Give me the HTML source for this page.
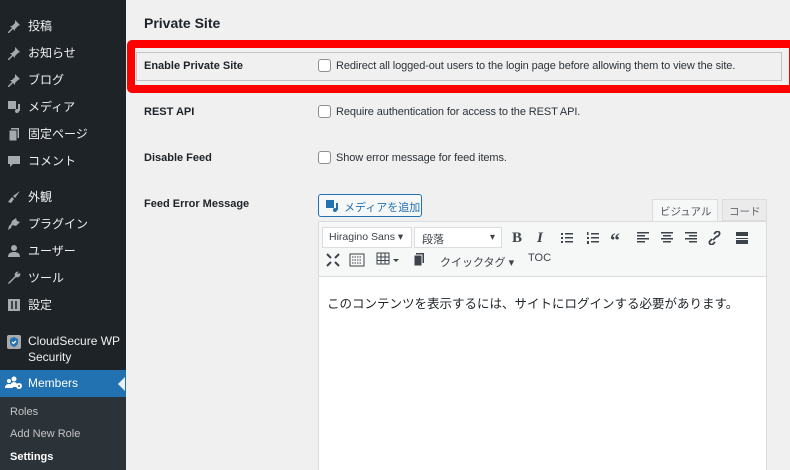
<!DOCTYPE html>
<html><head><meta charset="utf-8"><style>
*{box-sizing:border-box;margin:0;padding:0}
html,body{width:790px;height:470px;overflow:hidden}
body{background:#f0f0f1;font-family:"Liberation Sans","Noto Sans CJK JP",sans-serif;position:relative;font-size:12px;color:#1d2327}
#sb{position:absolute;left:0;top:0;width:126px;height:470px;background:#1d2327}
.mi{position:absolute;left:0;width:126px;color:#f0f0f1;font-size:12px;height:20px;line-height:20px}
.mi .ic{position:absolute;left:7px;top:3px;width:14px;height:14px;color:#a7aaad}
.mi span{position:absolute;left:28px}
.abs{position:absolute}
.cb{position:absolute;width:13px;height:13px;border:1px solid #8c8f94;border-radius:3px;background:#fff}
.lbl{position:absolute;left:144px;font-weight:bold;font-size:11px}
.desc{position:absolute;left:336px;font-size:11px;color:#2c3338;letter-spacing:-0.1px}
.tb{position:absolute;color:#3c434a;font-size:13px;font-weight:bold}
</style></head><body>
<div id="sb">
<div class="mi" style="top:16px"><svg class="ic" viewBox="0 0 14 14"><path d="M8 1l5 5-2 1-3 3 0 2-2-2-4 4-1 0 0-1 4-4-2-2 2 0 3-3z" fill="#a7aaad"/></svg><span>投稿</span></div>
<div class="mi" style="top:43px"><svg class="ic" viewBox="0 0 14 14"><path d="M8 1l5 5-2 1-3 3 0 2-2-2-4 4-1 0 0-1 4-4-2-2 2 0 3-3z" fill="#a7aaad"/></svg><span>お知らせ</span></div>
<div class="mi" style="top:70px"><svg class="ic" viewBox="0 0 14 14"><path d="M8 1l5 5-2 1-3 3 0 2-2-2-4 4-1 0 0-1 4-4-2-2 2 0 3-3z" fill="#a7aaad"/></svg><span>ブログ</span></div>
<div class="mi" style="top:97px"><svg class="ic" viewBox="0 0 14 14"><rect x="1" y="1" width="8" height="8" fill="#a7aaad"/><circle cx="10" cy="11" r="2" fill="#a7aaad"/><rect x="11" y="4" width="2" height="7" fill="#a7aaad"/></svg><span>メディア</span></div>
<div class="mi" style="top:124px"><svg class="ic" viewBox="0 0 14 14"><rect x="4" y="1" width="8" height="10" fill="#a7aaad"/><rect x="2" y="3" width="8" height="11" fill="#a7aaad" stroke="#1d2327"/></svg><span>固定ページ</span></div>
<div class="mi" style="top:151px"><svg class="ic" viewBox="0 0 14 14"><path d="M1 2h12v8H6l-3 3v-3H1z" fill="#a7aaad"/></svg><span>コメント</span></div>
<div class="mi" style="top:187px"><svg class="ic" viewBox="0 0 14 14"><path d="M13 1L6 6l2 2zM5 7l2 2-3 4-3-1z" fill="#a7aaad"/></svg><span>外観</span></div>
<div class="mi" style="top:214px"><svg class="ic" viewBox="0 0 14 14"><path d="M9 1l1 3 3 1-4 4-4-1-1 3-3 2 1-4 2-2 1-3z" fill="#a7aaad"/></svg><span>プラグイン</span></div>
<div class="mi" style="top:241px"><svg class="ic" viewBox="0 0 14 14"><circle cx="7" cy="4" r="3" fill="#a7aaad"/><path d="M1 13c0-4 3-5 6-5s6 1 6 5z" fill="#a7aaad"/></svg><span>ユーザー</span></div>
<div class="mi" style="top:268px"><svg class="ic" viewBox="0 0 14 14"><path d="M12 1a3 3 0 0 0-4 4L1 12l1 1 7-7a3 3 0 0 0 4-4l-2 1-1-1z" fill="#a7aaad"/></svg><span>ツール</span></div>
<div class="mi" style="top:295px"><svg class="ic" viewBox="0 0 14 14"><rect x="1" y="1" width="12" height="12" fill="#a7aaad"/><path d="M5 3v8M9 3v8" stroke="#1d2327" stroke-width="1.5"/></svg><span>設定</span></div>
<div class="abs" style="left:7px;top:335px;width:14px;height:14px;background:#a7aaad;border-radius:2px"><svg viewBox="0 0 14 14" width="14" height="14"><path d="M7 2l4 2v3c0 3-2 4-4 5-2-1-4-2-4-5V4z" fill="#2271b1"/><path d="M5 7l1.5 1.5L9 6" stroke="#fff" fill="none" stroke-width="1.3"/></svg></div>
<div class="abs" style="left:28px;top:333px;color:#f0f0f1;font-size:12px;line-height:16px;width:95px">CloudSecure WP Security</div>
<div class="abs" style="left:0;top:370px;width:126px;height:27px;background:#2271b1"></div>
<svg class="abs" style="left:5px;top:376px" width="18" height="14" viewBox="0 0 18 14"><circle cx="4" cy="5" r="2" fill="#fff"/><circle cx="9" cy="3" r="2.5" fill="#fff"/><path d="M0 12c0-3 2-4 4-4s4 1 4 4zM5 11c0-3 2-5 4-5s4 2 4 5z" fill="#fff"/><circle cx="14" cy="10" r="3" fill="#fff"/><circle cx="14" cy="10" r="1" fill="#2271b1"/></svg>
<div class="abs" style="left:28px;top:376px;color:#fff;font-size:12px">Members</div>
<div class="abs" style="left:118px;top:377px;width:0;height:0;border:7px solid transparent;border-right-color:#f0f0f1;border-left:0"></div>
<div class="abs" style="left:0;top:397px;width:126px;height:73px;background:#2c3338"></div>
<div class="abs" style="left:10px;top:406px;color:#c3c4c7;font-size:11px">Roles</div>
<div class="abs" style="left:10px;top:428px;color:#c3c4c7;font-size:11px">Add New Role</div>
<div class="abs" style="left:10px;top:451px;color:#fff;font-size:11px;font-weight:bold">Settings</div>
</div>

<div class="abs" style="left:144px;top:15px;font-size:14px;font-weight:bold">Private Site</div>
<div class="abs" style="left:127px;top:40px;width:670px;height:53px;border:8px solid #ff0000;border-radius:5px"></div>
<div class="abs" style="left:136px;top:52px;width:646px;height:29px;border:1px solid #c3c4c7"></div>
<div class="lbl" style="top:60px">Enable Private Site</div>
<div class="cb" style="left:318px;top:59px"></div>
<div class="desc" style="top:60px">Redirect all logged-out users to the login page before allowing them to view the site.</div>
<div class="lbl" style="top:106px">REST API</div>
<div class="cb" style="left:318px;top:105px"></div>
<div class="desc" style="top:106px">Require authentication for access to the REST API.</div>
<div class="lbl" style="top:152px">Disable Feed</div>
<div class="cb" style="left:318px;top:151px"></div>
<div class="desc" style="top:152px">Show error message for feed items.</div>
<div class="lbl" style="top:198px">Feed Error Message</div>

<div class="abs" style="left:318px;top:194px;width:104px;height:23px;border:1px solid #2271b1;border-radius:3px;background:#f6f7f7"></div>
<svg class="abs" style="left:325px;top:199px" width="14" height="14" viewBox="0 0 14 14"><rect x="1" y="1" width="8" height="8" fill="#2271b1"/><circle cx="10" cy="11" r="2" fill="#2271b1"/><rect x="11" y="4" width="2" height="7" fill="#2271b1"/></svg>
<div class="abs" style="left:344px;top:199px;color:#2271b1;font-size:11px">メディアを追加</div>
<div class="abs" style="left:652px;top:199px;width:66px;height:23px;background:#f6f7f7;border:1px solid #dcdcde;border-bottom:0"></div>
<div class="abs" style="left:660px;top:204px;font-size:10.5px;color:#50575e">ビジュアル</div>
<div class="abs" style="left:722px;top:199px;width:45px;height:22px;background:#ebebeb;border:1px solid #dcdcde"></div>
<div class="abs" style="left:729px;top:204px;font-size:10.5px;color:#646970">コード</div>
<div class="abs" style="left:318px;top:221px;width:449px;height:260px;border:1px solid #dcdcde;background:#fff"></div>
<div class="abs" style="left:319px;top:222px;width:447px;height:55px;background:#f6f7f7;border-bottom:1px solid #dcdcde"></div>
<div class="abs" style="left:322px;top:227px;width:90px;height:21px;background:#fff;border:1px solid #dcdcde"></div>
<div class="abs" style="left:329px;top:231px;font-size:10.5px;color:#3c434a">Hiragino Sans ▾</div>
<div class="abs" style="left:414px;top:227px;width:88px;height:21px;background:#fff;border:1px solid #dcdcde"></div>
<div class="abs" style="left:422px;top:231px;font-size:11px;color:#3c434a">段落</div>
<div class="abs" style="left:490px;top:232px;font-size:10px;color:#3c434a">▾</div>
<div class="tb" style="left:512px;top:230px;font-family:'Liberation Serif',serif;font-size:15px">B</div>
<div class="tb" style="left:537px;top:230px;font-family:'Liberation Serif',serif;font-size:15px;font-style:italic">I</div>
<svg class="abs" style="left:561px;top:231px" width="190" height="14" viewBox="0 0 190 14" fill="#3c434a">
<g><rect x="0" y="2" width="2" height="2"/><rect x="0" y="6" width="2" height="2"/><rect x="0" y="10" width="2" height="2"/><rect x="4" y="2" width="8" height="1.5"/><rect x="4" y="6" width="8" height="1.5"/><rect x="4" y="10" width="8" height="1.5"/></g>
<g transform="translate(26,0)"><rect x="0" y="1" width="1.5" height="3"/><rect x="0" y="6" width="2" height="2"/><rect x="0" y="10" width="2" height="3"/><rect x="4" y="2" width="8" height="1.5"/><rect x="4" y="6" width="8" height="1.5"/><rect x="4" y="10" width="8" height="1.5"/></g>
<text x="49" y="16" font-size="20" font-weight="bold" font-family="Liberation Serif">“</text>
<g transform="translate(76,0)"><rect y="1" width="12" height="1.5"/><rect y="4" width="8" height="1.5"/><rect y="7" width="12" height="1.5"/><rect y="10" width="8" height="1.5"/></g>
<g transform="translate(100,0)"><rect y="1" width="12" height="1.5"/><rect x="2" y="4" width="8" height="1.5"/><rect y="7" width="12" height="1.5"/><rect x="2" y="10" width="8" height="1.5"/></g>
<g transform="translate(124,0)"><rect y="1" width="12" height="1.5"/><rect x="4" y="4" width="8" height="1.5"/><rect y="7" width="12" height="1.5"/><rect x="4" y="10" width="8" height="1.5"/></g>
<path d="M151 8l-2 2a2 2 0 0 0 3 3l2-2M156 6l2-2a2 2 0 0 0-3-3l-2 2M152 9l4-4" stroke="#3c434a" stroke-width="1.8" fill="none"/>
<g transform="translate(175,0)"><rect y="1" width="12" height="4"/><rect y="7" width="12" height="1"/><rect y="9" width="12" height="4"/></g>
</svg>
<svg class="abs" style="left:326px;top:252px" width="180" height="16" viewBox="0 0 180 16" fill="#3c434a">
<path d="M1 2l4 4M13 2l-4 4M1 14l4-4M13 14l-4-4" stroke="#3c434a" stroke-width="2"/>
<rect x="24" y="2" width="14" height="12" fill="none" stroke="#3c434a"/><path d="M26 5h10M26 8h10M26 11h10" stroke="#3c434a" stroke-dasharray="1.5 1"/>
<rect x="51" y="1" width="12" height="11" fill="none" stroke="#3c434a"/><path d="M51 5h12M51 8.5h12M55 1v11M59 1v11" stroke="#3c434a"/><path d="M67 7h6l-3 3z"/>
<rect x="90" y="1" width="8" height="10"/><rect x="88" y="3" width="8" height="11" stroke="#f6f7f7"/>
</svg>
<div class="abs" style="left:440px;top:254px;font-size:11px;color:#3c434a">クイックタグ ▾</div>
<div class="abs" style="left:528px;top:252px;font-size:11px;color:#3c434a">TOC</div>
<div class="abs" style="left:327px;top:293px;font-size:12.5px;color:#1d2327">このコンテンツを表示するには、サイトにログインする必要があります。</div>
</body></html>
